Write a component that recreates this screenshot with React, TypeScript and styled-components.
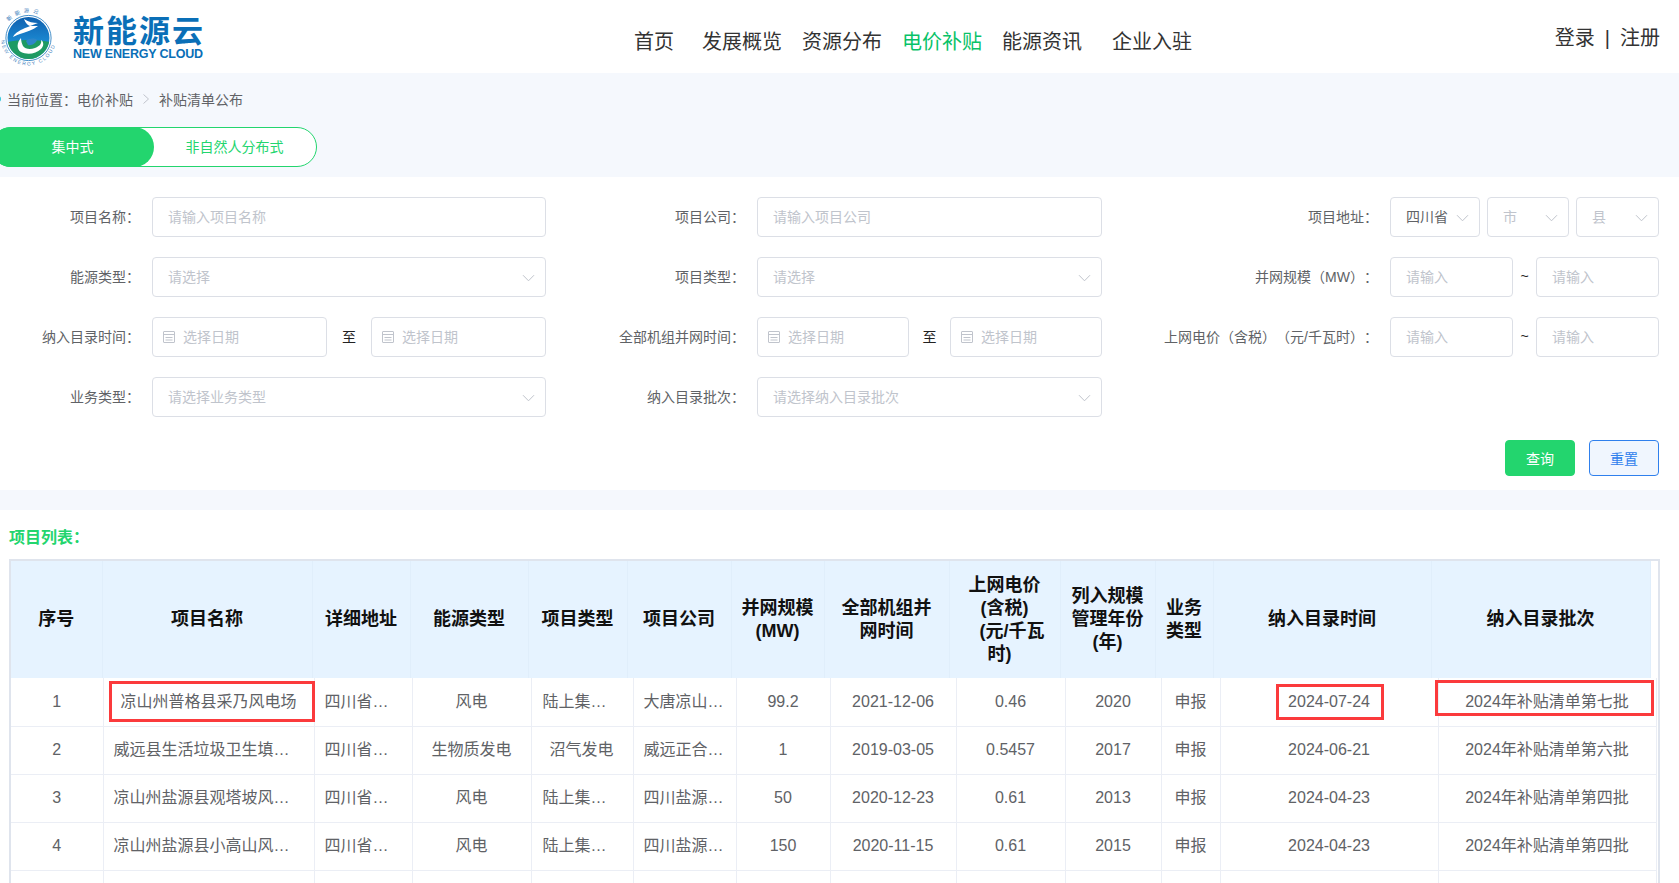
import React, {FC} from 'react';
import styled, {createGlobalStyle} from 'styled-components';

const GlobalStyle = createGlobalStyle`
  html, body {
    margin: 0;
    padding: 0;
    height: 100%;
    overflow: hidden;
    background: #fff;
  }
  body, input, button {
    font-family: "Liberation Sans", "Noto Sans CJK SC", sans-serif;
  }
  * {
    box-sizing: border-box;
  }
`;

const Page = styled.div`
  height: 883px;
  overflow: hidden;
`;

const Header = styled.header`
  display: flex;
  align-items: center;
  height: 73px;
  background: #fff;
  color: #333;
`;

const LogoWrap = styled.div`
  display: flex;
  align-items: center;
  width: 634px;
  padding-top: 3px;
`;

const LogoText = styled.div`
  display: flex;
  flex-direction: column;
  margin-left: 15px;
  color: #0a6fb7;
`;

const LogoName = styled.span`
  font-size: 31px;
  line-height: 32px;
  font-weight: 700;
  letter-spacing: 2px;
  white-space: nowrap;
`;

const LogoSub = styled.span`
  margin-top: -1px;
  font-size: 12.5px;
  line-height: 14px;
  font-weight: 700;
  letter-spacing: -0.2px;
  white-space: nowrap;
`;

const Nav = styled.nav`
  display: flex;
  gap: 20px;
  padding-top: 11px;
`;

const NavItem = styled.a<{$active?: boolean; $after?: number}>`
  font-size: 20px;
  line-height: 28px;
  white-space: nowrap;
  color: ${p => (p.$active ? '#08c268' : '#333')};
  margin-right: ${p => p.$after || 0}px;
`;

const Auth = styled.div`
  display: flex;
  gap: 10px;
  margin-left: auto;
  padding: 2px 19px 0 0;
  font-size: 20px;
  line-height: 28px;
`;

const Band = styled.div`
  height: 104px;
  background: #f5f8fd;
  padding-top: 16px;
`;

const Breadcrumb = styled.div`
  display: flex;
  align-items: center;
  height: 20px;
  font-size: 14px;
  color: #606266;
  text-spacing-trim: space-all;
`;

const CrumbDot = styled.i`
  width: 6px;
  height: 6px;
  margin-left: -5px;
  margin-right: 6px;
  border-radius: 50%;
  background: #2cc7d8;
`;

const CrumbArrow = styled.svg`
  margin: 0 10px 0 10px;
  fill: none;
  stroke: #c0c4cc;
  stroke-width: 1;
`;

const Toggle = styled.div`
  display: flex;
  width: 326px;
  height: 40px;
  margin: 18px 0 0 -9px;
  background: #fff;
  border: 1px solid #23d56e;
  border-radius: 20px;
  font-size: 14px;
`;

const ToggleItem = styled.div<{$active?: boolean}>`
  display: flex;
  align-items: center;
  justify-content: center;
  flex: 1;
  margin: -1px 0 -1px -1px;
  padding-bottom: 2px;
  border-radius: 20px;
  color: ${p => (p.$active ? '#fff' : '#23d56e')};
  background: ${p => (p.$active ? '#23d56e' : 'transparent')};
`;

const Form = styled.form`
  padding: 20px 0 14px;
  background: #fff;
`;

const FormGrid = styled.div`
  display: grid;
  grid-template-columns: 546px 556px 557px;
  grid-auto-rows: 40px;
  row-gap: 20px;
`;

const Item = styled.div<{$label: number}>`
  display: grid;
  grid-template-columns: ${p => p.$label}px 1fr;
  align-items: center;
`;

const Label = styled.label`
  padding: 0 12px 3px 0;
  font-size: 14px;
  color: #606266;
  text-align: right;
  white-space: nowrap;
  text-spacing-trim: space-all;
`;

const Input = styled.input`
  width: 100%;
  min-width: 0;
  height: 40px;
  padding: 0 15px;
  background: #fff;
  border: 1px solid #dcdfe6;
  border-radius: 4px;
  font-size: 14px;
  color: #606266;
  outline: none;

  &::placeholder {
    color: #c0c4cc;
    opacity: 1;
  }
`;

const SelectBox = styled.div<{$width?: number}>`
  display: flex;
  align-items: center;
  justify-content: space-between;
  height: 40px;
  width: ${p => (p.$width ? `${p.$width}px` : '100%')};
  padding: 0 10px 2px 15px;
  background: #fff;
  border: 1px solid #dcdfe6;
  border-radius: 4px;
  font-size: 14px;
`;

const SelectText = styled.span<{$filled?: boolean}>`
  color: ${p => (p.$filled ? '#606266' : '#c0c4cc')};
  white-space: nowrap;
`;

const Arrow = styled.svg`
  flex: none;
  margin-top: 3px;
  fill: none;
  stroke: #c0c4cc;
  stroke-width: 1;
`;

const DateBox = styled.div`
  position: relative;
  flex: 1;
  min-width: 0;

  input {
    padding-left: 30px;
  }

  svg {
    position: absolute;
    left: 10px;
    top: 13px;
    fill: none;
    stroke: #c0c4cc;
    stroke-width: 1;
  }
`;

const Range = styled.div`
  display: flex;
  align-items: center;
`;

const RangeSep = styled.span<{$width: number}>`
  flex: none;
  width: ${p => p.$width}px;
  padding-bottom: 2px;
  font-size: 14px;
  text-align: center;
  color: #222;
`;

const AddressRow = styled.div`
  display: flex;
  gap: 7px;
`;

const Actions = styled.div`
  display: flex;
  justify-content: flex-end;
  gap: 14px;
  margin-top: 23px;
  padding-right: 20px;
`;

const Button = styled.button<{$primary?: boolean}>`
  width: 70px;
  height: 36px;
  padding: 0;
  font-size: 14px;
  border-radius: 4px;
  border: 1px solid ${p => (p.$primary ? '#23d56e' : '#2f80ed')};
  background: ${p => (p.$primary ? '#23d56e' : '#f0f6fe')};
  color: ${p => (p.$primary ? '#fff' : '#2f80ed')};
`;

const Divider = styled.div`
  height: 20px;
  background: #f5f8fd;
`;

const ListSection = styled.section`
  background: #fff;
`;

const ListTitle = styled.h3`
  margin: 0;
  padding: 17px 0 0 9px;
  height: 49px;
  font-size: 16px;
  line-height: 22px;
  font-weight: 700;
  color: #23d56e;
  text-spacing-trim: space-all;
`;

const TableWrap = styled.div`
  width: 1651px;
  margin-left: 9px;
  border: 2px solid #dfe4ed;
  border-bottom: 0;
`;

const Table = styled.table<{$width: number}>`
  table-layout: fixed;
  width: ${p => p.$width}px;
  border-collapse: collapse;
`;

const Th = styled.th`
  height: 117px;
  padding: 0;
  background: #e6f3ff;
  border-right: 1px solid #e0eefb;
  font-size: 18px;
  line-height: 23px;
  font-weight: 700;
  color: #111;
  text-align: center;
  white-space: pre-line;
`;

const Td = styled.td`
  position: relative;
  height: 48px;
  padding: 0 10px;
  border-right: 1px solid #ebeef5;
  border-bottom: 1px solid #ebeef5;
  font-size: 16px;
  line-height: 24px;
  color: #606266;
  text-align: center;
  white-space: nowrap;
  overflow: hidden;
  text-overflow: ellipsis;

  &:nth-child(5) {
    padding: 0 12px 0 11px;
  }
`;

const MarkedTd = styled(Td)`
  overflow: visible;
`;

const RedMark = styled.span<{$left: number; $top: number; $w: number; $h: number}>`
  position: absolute;
  left: ${p => p.$left}px;
  top: ${p => p.$top}px;
  width: ${p => p.$w}px;
  height: ${p => p.$h}px;
  border: 3px solid #fb3a3c;
  pointer-events: none;
`;

const headWidths = [91, 210, 98, 118, 99, 104, 93, 125, 111, 95, 58, 218, 219];
const bodyWidths = [92, 211, 98, 119, 102, 103, 94, 126, 109, 96, 59, 218, 218];

const headers = [
    '序号',
    '项目名称',
    '详细地址',
    '能源类型',
    '项目类型',
    '项目公司',
    '并网规模\n(MW)',
    '全部机组并\n网时间',
    '上网电价\n(含税)\n\u00a0\u00a0\u00a0(元/千瓦\n时)\u00a0\u00a0',
    '列入规模\n管理年份\n(年)',
    '业务\n类型',
    '纳入目录时间',
    '纳入目录批次',
];

const rows = [
    ['1', '凉山州普格县采乃风电场', '四川省凉山州普格县', '风电', '陆上集中式风电', '大唐凉山新能源有限公司', '99.2', '2021-12-06', '0.46', '2020', '申报', '2024-07-24', '2024年补贴清单第七批'],
    ['2', '威远县生活垃圾卫生填埋场沼气发电项目', '四川省内江市威远县', '生物质发电', '沼气发电', '威远正合环保能源有限公司', '1', '2019-03-05', '0.5457', '2017', '申报', '2024-06-21', '2024年补贴清单第六批'],
    ['3', '凉山州盐源县观塔坡风电场', '四川省凉山州盐源县', '风电', '陆上集中式风电', '四川盐源新能源有限公司', '50', '2020-12-23', '0.61', '2013', '申报', '2024-04-23', '2024年补贴清单第四批'],
    ['4', '凉山州盐源县小高山风电场', '四川省凉山州盐源县', '风电', '陆上集中式风电', '四川盐源新能源有限公司', '150', '2020-11-15', '0.61', '2015', '申报', '2024-04-23', '2024年补贴清单第四批'],
    ['5', '凉山州盐源县平川风电场', '四川省凉山州盐源县', '风电', '陆上集中式风电', '四川盐源新能源有限公司', '100', '2020-11-15', '0.61', '2015', '申报', '2024-04-23', '2024年补贴清单第四批'],
];

// red boxes drawn over the first row: column index -> offset inside the cell
const marks: Record<number, {left: number; top: number; w: number; h: number}> = {
    1: {left: 5, top: 3, w: 206, h: 41},
    11: {left: 55, top: 6, w: 108, h: 36},
    12: {left: -4, top: 2, w: 219, h: 36},
};

const Chevron: FC = () => (
    <Arrow width="13" height="8" viewBox="0 0 13 8">
        <path d="M1 1.2l5.5 5.6L12 1.2"/>
    </Arrow>
);

const CalendarIcon: FC = () => (
    <svg width="14" height="14" viewBox="0 0 14 14">
        <rect x="1.5" y="1.5" width="11" height="11" rx="0.5"/>
        <path d="M1.5 4.5h11M3.5 7.5h7M3.5 10h7"/>
    </svg>
);

const Logo: FC = () => (
    <svg width="58" height="66" viewBox="0 0 58 66" style={{flex: 'none'}}>
        <defs>
            <linearGradient id="sky" x1="0" y1="0" x2="0" y2="1">
                <stop offset="0" stopColor="#0e5fae"/>
                <stop offset="0.55" stopColor="#1a86cf"/>
                <stop offset="1" stopColor="#3fa7dd"/>
            </linearGradient>
            <clipPath id="disc">
                <circle cx="28.5" cy="33" r="21"/>
            </clipPath>
            <path id="ringTop" d="M3 33a25.5 25.5 0 0 1 51 0"/>
            <path id="ringBottom" d="M1 33a27.5 27.5 0 0 0 55 0"/>
        </defs>
        <circle cx="28.5" cy="33" r="22.6" fill="none" stroke="#1673bd" strokeWidth="0.8"/>
        <g clipPath="url(#disc)">
            <rect x="7" y="11" width="43" height="44" fill="url(#sky)"/>
            <path d="M7 37c10-2 26-3 43 0v19H7z" fill="#1e9a63"/>
            <path d="M24 14c5 3 9 4 14 4-3 1-5 2-8 3 3 0 6 0 8 0-5 4-12 6-18 8-3 1-5 2-7 3 1-3 5-6 12-9 2-1 4-1 5-2-3-1-5-4-6-7z" fill="#fff"/>
            <path d="M21 33c-4 4-5 11 0 14 6 3 15 2 20-3 3-3 3-7 0-9 1 3-1 6-6 8-5 2-10 1-12-2-1-2-2-5-2-8z" fill="#fff"/>
            <path d="M26 36c3-3 9-3 11-1-1 3-5 6-9 5z" fill="#2e86c9"/>
        </g>
        <text fontSize="5.4" fontWeight="400" fill="#3f82bd" letterSpacing="3.4">
            <textPath href="#ringTop" startOffset="22%">新能源云</textPath>
        </text>
        <text fontSize="5" fontWeight="400" fill="#3f82bd" letterSpacing="1.5">
            <textPath href="#ringBottom" startOffset="3%">NEW ENERGY CLOUD</textPath>
        </text>
    </svg>
);

const App: FC = () => {
    return (
        <Page>
            <GlobalStyle/>
            <Header>
                <LogoWrap>
                    <Logo/>
                    <LogoText>
                        <LogoName>新能源云</LogoName>
                        <LogoSub>NEW ENERGY CLOUD</LogoSub>
                    </LogoText>
                </LogoWrap>
                <Nav>
                    <NavItem $after={8}>首页</NavItem>
                    <NavItem>发展概览</NavItem>
                    <NavItem>资源分布</NavItem>
                    <NavItem $active>电价补贴</NavItem>
                    <NavItem $after={10}>能源资讯</NavItem>
                    <NavItem>企业入驻</NavItem>
                </Nav>
                <Auth>
                    <span>登录</span>
                    <span>|</span>
                    <span>注册</span>
                </Auth>
            </Header>

            <Band>
                <Breadcrumb>
                    <CrumbDot/>
                    <span>当前位置：电价补贴</span>
                    <CrumbArrow width="6" height="10" viewBox="0 0 6 10">
                        <path d="M0.5 0.5L5.5 5L0.5 9.5"/>
                    </CrumbArrow>
                    <span>补贴清单公布</span>
                </Breadcrumb>
                <Toggle>
                    <ToggleItem $active>集中式</ToggleItem>
                    <ToggleItem>非自然人分布式</ToggleItem>
                </Toggle>
            </Band>

            <Form>
                <FormGrid>
                    <Item $label={152}>
                        <Label>项目名称：</Label>
                        <Input placeholder="请输入项目名称"/>
                    </Item>
                    <Item $label={211}>
                        <Label>项目公司：</Label>
                        <Input placeholder="请输入项目公司"/>
                    </Item>
                    <Item $label={288}>
                        <Label>项目地址：</Label>
                        <AddressRow>
                            <SelectBox $width={90}><SelectText $filled>四川省</SelectText><Chevron/></SelectBox>
                            <SelectBox $width={82}><SelectText>市</SelectText><Chevron/></SelectBox>
                            <SelectBox $width={83}><SelectText>县</SelectText><Chevron/></SelectBox>
                        </AddressRow>
                    </Item>

                    <Item $label={152}>
                        <Label>能源类型：</Label>
                        <SelectBox><SelectText>请选择</SelectText><Chevron/></SelectBox>
                    </Item>
                    <Item $label={211}>
                        <Label>项目类型：</Label>
                        <SelectBox><SelectText>请选择</SelectText><Chevron/></SelectBox>
                    </Item>
                    <Item $label={288}>
                        <Label>并网规模（MW）：</Label>
                        <Range>
                            <Input placeholder="请输入"/>
                            <RangeSep $width={23}>~</RangeSep>
                            <Input placeholder="请输入"/>
                        </Range>
                    </Item>

                    <Item $label={152}>
                        <Label>纳入目录时间：</Label>
                        <Range>
                            <DateBox><CalendarIcon/><Input placeholder="选择日期"/></DateBox>
                            <RangeSep $width={44}>至</RangeSep>
                            <DateBox><CalendarIcon/><Input placeholder="选择日期"/></DateBox>
                        </Range>
                    </Item>
                    <Item $label={211}>
                        <Label>全部机组并网时间：</Label>
                        <Range>
                            <DateBox><CalendarIcon/><Input placeholder="选择日期"/></DateBox>
                            <RangeSep $width={41}>至</RangeSep>
                            <DateBox><CalendarIcon/><Input placeholder="选择日期"/></DateBox>
                        </Range>
                    </Item>
                    <Item $label={288}>
                        <Label>上网电价（含税）（元/千瓦时）：</Label>
                        <Range>
                            <Input placeholder="请输入"/>
                            <RangeSep $width={23}>~</RangeSep>
                            <Input placeholder="请输入"/>
                        </Range>
                    </Item>

                    <Item $label={152}>
                        <Label>业务类型：</Label>
                        <SelectBox><SelectText>请选择业务类型</SelectText><Chevron/></SelectBox>
                    </Item>
                    <Item $label={211}>
                        <Label>纳入目录批次：</Label>
                        <SelectBox><SelectText>请选择纳入目录批次</SelectText><Chevron/></SelectBox>
                    </Item>
                </FormGrid>
                <Actions>
                    <Button type="button" $primary>查询</Button>
                    <Button type="button">重置</Button>
                </Actions>
            </Form>

            <Divider/>

            <ListSection>
                <ListTitle>项目列表：</ListTitle>
                <TableWrap>
                    <Table $width={1639}>
                        <colgroup>
                            {headWidths.map((w, i) => <col key={i} width={w}/>)}
                        </colgroup>
                        <thead>
                            <tr>
                                {headers.map(h => <Th key={h}>{h}</Th>)}
                            </tr>
                        </thead>
                    </Table>
                    <Table $width={1645}>
                        <colgroup>
                            {bodyWidths.map((w, i) => <col key={i} width={w}/>)}
                        </colgroup>
                        <tbody>
                            {rows.map((row, r) => (
                                <tr key={row[0]}>
                                    {row.map((cell, c) => (r === 0 && marks[c]
                                        ? (
                                            <MarkedTd key={c}>
                                                {cell}
                                                <RedMark $left={marks[c].left} $top={marks[c].top} $w={marks[c].w} $h={marks[c].h}/>
                                            </MarkedTd>
                                        )
                                        : <Td key={c}>{cell}</Td>
                                    ))}
                                </tr>
                            ))}
                        </tbody>
                    </Table>
                </TableWrap>
            </ListSection>
        </Page>
    );
};

export default App;
